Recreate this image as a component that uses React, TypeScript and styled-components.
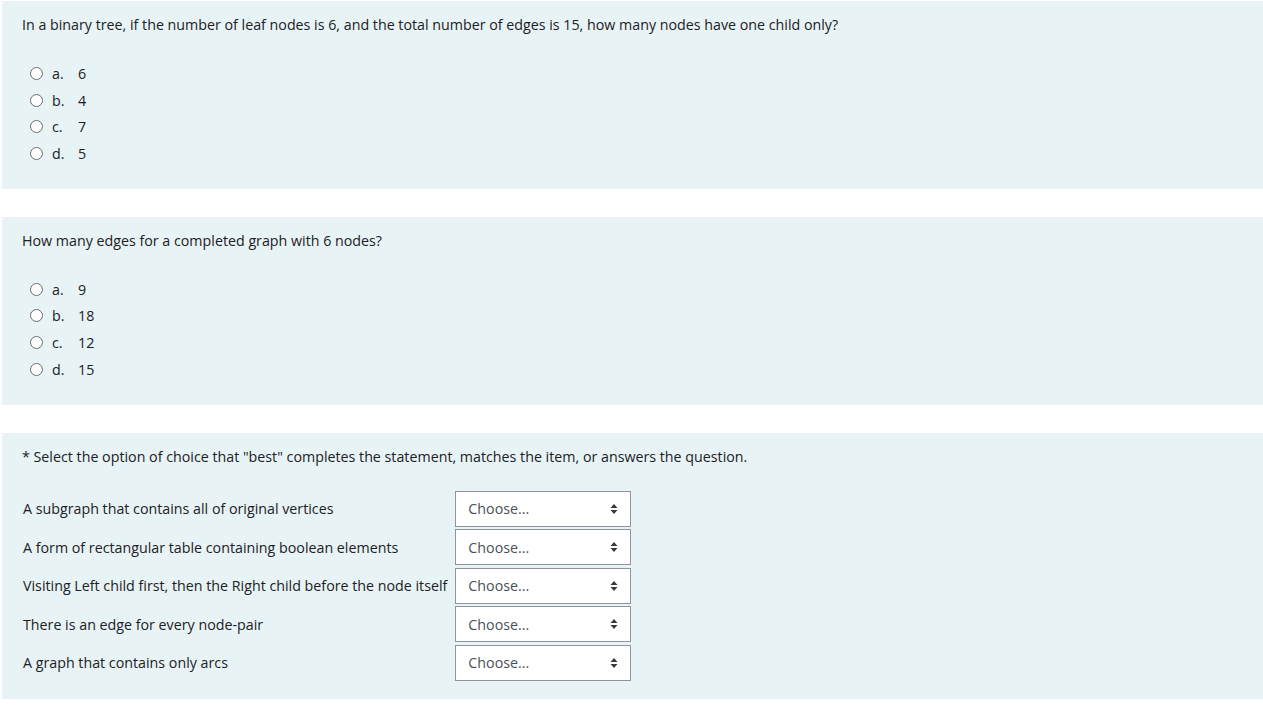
import styled, { createGlobalStyle } from 'styled-components';

const GlobalStyle = createGlobalStyle`
  body {
    margin: 0;
    padding: 1px 0 0 2px;
    background: #ffffff;
    font-family: 'Open Sans', 'Noto Sans', sans-serif;
    font-size: 14.25px;
    color: #1d2125;
  }
`;

const Page = styled.div`
  display: flex;
  flex-direction: column;
  gap: 28px;
`;

const Panel = styled.div<{ $bottom?: number }>`
  background: #e7f3f5;
  padding: 14px 20px ${p => p.$bottom ?? 16}px 20px;
`;

const QuestionText = styled.p<{ $gap?: number }>`
  margin: 0 0 ${p => (p.$gap ?? 25)}px 0;
  line-height: 20px;
`;

const Options = styled.div`
  display: flex;
  flex-direction: column;
  padding-bottom: 6px;
`;

const Option = styled.label`
  display: flex;
  align-items: center;
  height: 26.7px;
  padding-left: 8px;
`;

const Radio = styled.span`
  width: 13px;
  height: 13px;
  border-radius: 50%;
  border: 1px solid #6b6b6b;
  background: #fff;
  box-sizing: border-box;
  margin-right: 9px;
`;

const Letter = styled.span`
  width: 26px;
`;

const MatchGrid = styled.div`
  display: grid;
  grid-template-columns: max-content 176px;
  column-gap: 8px;
  row-gap: 2.5px;
  align-items: center;
  margin-top: 24px;
`;

const MatchLabel = styled.span`
  padding-left: 1px;
`;

const Select = styled.div`
  height: 36px;
  box-sizing: border-box;
  border: 1px solid #8f959e;
  background: #fff;
  display: flex;
  align-items: center;
  justify-content: space-between;
  padding: 0 12px;
  color: #495057;
`;

const Arrows = () => (
  <svg width='8' height='12' viewBox='0 0 8 12'>
    <path d='M4 1 L7.5 5 H0.5 Z' fill='#343a40' />
    <path d='M4 11 L7.5 7 H0.5 Z' fill='#343a40' />
  </svg>
);

interface MCProps {
  text: string;
  answers: string[];
}

function MultiChoice({ text, answers }: MCProps) {
  return (
    <Panel>
      <QuestionText>{text}</QuestionText>
      <Options>
        {answers.map((a, i) => (
          <Option key={i}>
            <Radio />
            <Letter>{String.fromCharCode(97 + i)}.</Letter>
            <span>{a}</span>
          </Option>
        ))}
      </Options>
    </Panel>
  );
}

const matches = [
  'A subgraph that contains all of original vertices',
  'A form of rectangular table containing boolean elements',
  'Visiting Left child first, then the Right child before the node itself',
  'There is an edge for every node-pair',
  'A graph that contains only arcs',
];

export default function App() {
  return (
    <>
      <GlobalStyle />
      <Page>
        <MultiChoice
          text='In a binary tree, if the number of leaf nodes is 6, and the total number of edges is 15, how many nodes have one child only?'
          answers={['6', '4', '7', '5']}
        />
        <MultiChoice
          text='How many edges for a completed graph with 6 nodes?'
          answers={['9', '18', '12', '15']}
        />
        <Panel $bottom={18}>
          <QuestionText $gap={0}>
            * Select the option of choice that "best" completes the statement,
            matches the item, or answers the question.
          </QuestionText>
          <MatchGrid>
            {matches.map(m => (
              <>
                <MatchLabel key={m}>{m}</MatchLabel>
                <Select key={m + 's'}>
                  <span>Choose...</span>
                  <Arrows />
                </Select>
              </>
            ))}
          </MatchGrid>
        </Panel>
      </Page>
    </>
  );
}
